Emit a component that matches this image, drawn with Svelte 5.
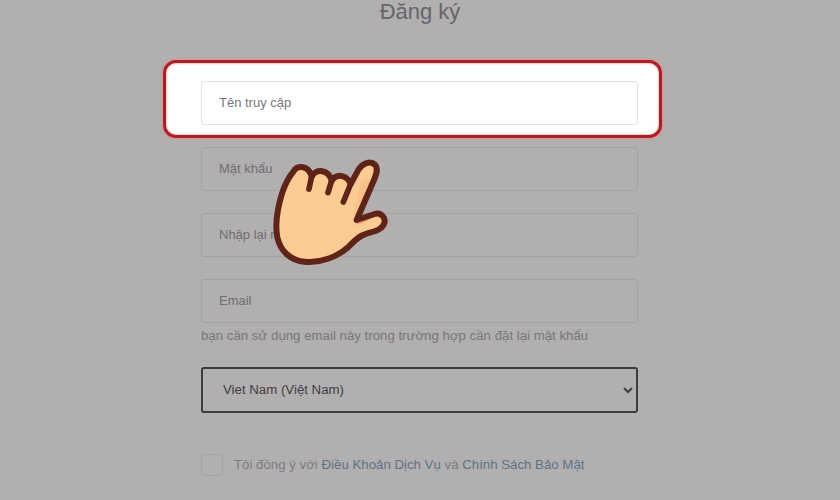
<script lang="ts">
  let country = $state("vn");
  let agreed = $state(false);

  const outline =
    "M100 95 C112 74 146 76 155 110 C168 84 206 88 215 122 C232 98 262 106 272 132 L296 88 C308 70 330 60 346 75 C356 88 348 104 342 120 L290 240 L344 222 C362 216 380 234 372 252 C364 270 344 274 322 280 C300 286 286 300 266 320 C232 350 184 370 134 365 C94 362 62 336 52 292 C44 250 52 206 66 160 C74 136 88 110 100 95 Z";
</script>

<div class="page">
  <h1>Đăng ký</h1>

  <form class="form">
    <div class="field first">
      <div class="spot"></div>
      <input type="text" placeholder="Tên truy cập" />
    </div>
    <div class="field">
      <input type="password" placeholder="Mật khẩu" />
    </div>
    <div class="field">
      <input type="password" placeholder="Nhập lại mật khẩu" />
    </div>
    <div class="field email">
      <input type="email" placeholder="Email" />
    </div>
    <p class="hint">bạn cần sử dụng email này trong trường hợp cần đặt lại mật khẩu</p>

    <select bind:value={country}>
      <option value="vn">Viet Nam (Việt Nam)</option>
    </select>

    <label class="agree">
      <input type="checkbox" bind:checked={agreed} />
      <span>Tôi đồng ý với <a href="#terms">Điều Khoản Dịch Vụ</a> và <a href="#privacy">Chính Sách Bảo Mật</a></span>
    </label>

    <!-- Pointing hand -->
    <svg class="hand" viewBox="0 0 420 390" xmlns="http://www.w3.org/2000/svg" aria-hidden="true">
      <path d={outline} fill="#fbcb94" />
      <path d="M290 240 L344 224 C332 240 308 252 288 254 Z" fill="#f3a67c" />
      <path d="M304 122 L340 118 L292 228 L280 226 Z" fill="#f8bb84" opacity="0.7" />
      <path d={outline} fill="none" stroke="#5e2417" stroke-width="18" stroke-linejoin="round" />
      <path
        d="M155 110 L147 147 M215 122 L204 158 M272 132 L250 186"
        fill="none"
        stroke="#5e2417"
        stroke-width="17"
        stroke-linecap="round"
      />
    </svg>
  </form>
</div>

<style>
  :global(body) {
    margin: 0;
    background: #b1afb0;
    overflow: hidden;
  }

  .page {
    font-family: "Liberation Sans", Arial, sans-serif;
    height: 500px;
    display: flex;
    flex-direction: column;
    align-items: center;
    color: #6a696a;
  }

  h1 {
    margin: 0;
    font-size: 22px;
    font-weight: 400;
    line-height: 24px;
    color: #666567;
  }

  .form {
    position: relative;
    width: 437px;
    margin: 57px 1px 0 0;
  }

  .field {
    position: relative;
    margin-bottom: 22px;
  }

  .field.email {
    margin-bottom: 5px;
  }

  .spot {
    position: absolute;
    inset: -21px -24px -13px -38px;
    background: #fff;
    border: 3px solid #ad1f27;
    border-radius: 13px;
    box-shadow: 0 0 2px 1px #e09090, inset 0 0 2px 1px #f6c4c4;
  }

  input[type="text"],
  input[type="password"],
  input[type="email"] {
    position: relative;
    display: block;
    box-sizing: border-box;
    width: 100%;
    height: 44px;
    padding: 0 17px 2px;
    border: 1px solid #a3a1a2;
    border-radius: 3px;
    background: transparent;
    font: inherit;
    font-size: 13px;
    outline: none;
  }

  input::placeholder {
    color: #6f6e70;
    opacity: 1;
  }

  .first input[type="text"] {
    border-color: #e3e3e3;
    background: #fff;
  }

  .first input::placeholder {
    color: #777;
  }

  .hint {
    margin: 0 0 23px;
    font-size: 13.25px;
    line-height: 16px;
    color: #777678;
  }

  select {
    display: block;
    box-sizing: border-box;
    width: 100%;
    height: 46px;
    padding: 0 16px 2px;
    border: 2px solid #3d3c3e;
    border-radius: 3px;
    background: transparent;
    color: #3f3e40;
    font: inherit;
    font-size: 13.25px;
    outline: none;
  }

  .agree {
    display: flex;
    align-items: center;
    gap: 11px;
    margin-top: 41px;
    font-size: 13.25px;
    color: #7d7c7e;
  }

  .agree input {
    appearance: none;
    width: 22px;
    height: 22px;
    margin: 0;
    border: 1px solid #a3a1a2;
    border-radius: 3px;
  }

  .agree span {
    margin-bottom: 2px;
  }

  a {
    color: #5d7285;
    text-decoration: none;
  }

  .hand {
    position: absolute;
    left: 59px;
    top: 59px;
    width: 140px;
    height: 130px;
  }
</style>
